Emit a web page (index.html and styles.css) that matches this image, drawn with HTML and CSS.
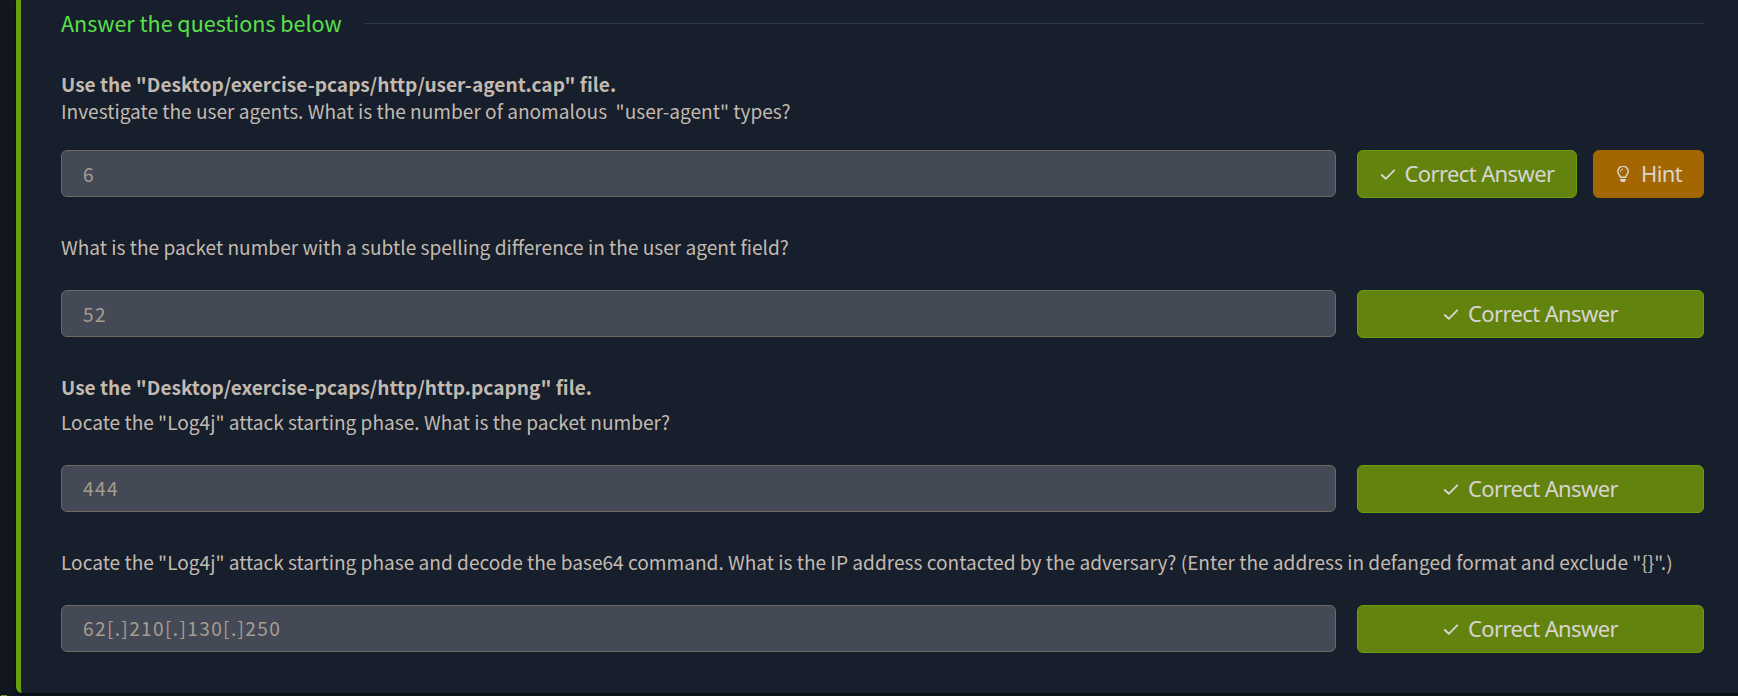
FILE: index.html
```html
<!DOCTYPE html>
<html lang="en">
<head>
<meta charset="utf-8">
<title>Answer the questions below</title>
<link rel="stylesheet" href="styles.css">
</head>
<body>
<svg class="sprite" aria-hidden="true">
  <symbol id="check" viewBox="0 0 16 16"><path d="M1.800 9 5.800 12.800 14.200 4.400" fill="none" stroke="currentColor" stroke-width="1.900" stroke-linecap="round" stroke-linejoin="round"/></symbol>
  <symbol id="bulb" viewBox="0 0 12 16"><path d="M3.500 11.200C3.200 9.400.800 8.200.800 5.500a5.200 5.200 0 0 1 10.400 0C11.200 8.200 8.800 9.400 8.500 11.200Z" fill="none" stroke="currentColor" stroke-width="1.500"/><path d="M3.400 5.700A2.600 2.600 0 0 1 6 3.100" fill="none" stroke="currentColor" stroke-width="1"/><path d="M3 13h6v.8L7.600 16H4.400L3 13.800Z" fill="currentColor"/></symbol>
</svg>
<main class="card">
  <header class="heading"><h1>Answer the questions below</h1><span class="rule"></span></header>

  <section class="question first">
    <div class="prompt"><strong>Use the "Desktop/exercise-pcaps/http/user-agent.cap" file.</strong><p>Investigate the user agents. What is the number of anomalous&nbsp; "user-agent" types?</p></div>
    <div class="row"><div class="answer low">6</div><div class="actions"><button class="btn correct"><svg class="check"><use href="#check"/></svg><span>Correct Answer</span></button><button class="btn hint"><svg class="bulb"><use href="#bulb"/></svg><span>Hint</span></button></div></div>
  </section>

  <section class="question">
    <div class="prompt"><p>What is the packet number with a subtle spelling difference in the user agent field?</p></div>
    <div class="row"><div class="answer low">52</div><div class="actions"><button class="btn correct"><svg class="check"><use href="#check"/></svg><span>Correct Answer</span></button></div></div>
  </section>

  <section class="question spaced">
    <div class="prompt"><strong>Use the "Desktop/exercise-pcaps/http/http.pcapng" file.</strong><p>Locate the "Log4j" attack starting phase. What is the packet number?</p></div>
    <div class="row"><div class="answer">444</div><div class="actions"><button class="btn correct"><svg class="check"><use href="#check"/></svg><span>Correct Answer</span></button></div></div>
  </section>

  <section class="question">
    <div class="prompt"><p>Locate the "Log4j" attack starting phase and decode the base64 command. What is the IP address contacted by the adversary? (Enter the address in defanged format and exclude "{}".)</p></div>
    <div class="row"><div class="answer">62[.]210[.]130[.]250</div><div class="actions"><button class="btn correct"><svg class="check"><use href="#check"/></svg><span>Correct Answer</span></button></div></div>
  </section>
</main>
<span class="marker"></span>
</body>
</html>
```
FILE: styles.css
```css
* { box-sizing: border-box; }
body {
  margin: 0;
  height: 696px;
  overflow: hidden;
  padding-left: 16px;
  background: #12161f;
  color: #c2bab0;
  font-family: "Noto Sans CJK SC", sans-serif;
  font-size: 19.100px;
}
.sprite { position: absolute; width: 0; height: 0; }
.card {
  height: 693px;
  padding: 7px 34px 0 40px;
  border-left: 5px solid #689f0e;
  border-radius: 0 0 0 6px;
  background: #171e2c;
  box-shadow: 0 2px 3px #080b10;
}
/* top edge of the next card's status dot */
.marker {
  position: absolute;
  left: 1px;
  top: 695px;
  width: 6px;
  height: 1px;
  background: #689f0e;
}
.heading { display: flex; align-items: center; gap: 22px; height: 32px; }
h1 { margin: 0; font-size: 21.500px; font-weight: 400; line-height: 32px; color: #5ae04a; white-space: nowrap; }
.rule { flex: 1; height: 1px; background: #2b3948; }
.question { height: 140px; }
.question.first { height: 191px; padding-top: 28px; }
.question.spaced { height: 175px; }
.prompt { height: 60px; padding-top: 3px; line-height: 28px; white-space: nowrap; }
.first .prompt { height: 83px; padding-top: 4px; line-height: 27px; }
.spaced .prompt { height: 95px; line-height: 35px; padding-top: 0; }
.prompt strong { display: block; font-weight: 700; letter-spacing: 0.010px; font-variant-ligatures: common-ligatures; }
.prompt p { margin: 0; }
.row { display: flex; gap: 21px; }
.answer {
  flex: 1;
  height: 47px;
  padding-left: 21px;
  border: 1px solid #70695f;
  border-radius: 6px;
  background: #444956;
  color: #a69d90;
  line-height: 45px;
  letter-spacing: 1.350px;
}
.answer.low { line-height: 47px; }
.actions { display: flex; gap: 16px; width: 347px; }
.btn {
  display: flex;
  flex: 1;
  align-items: center;
  justify-content: center;
  height: 48px;
  padding: 0;
  border: 1px solid #689f0e;
  border-radius: 6px;
  background: #62840f;
  color: #d8d4cf;
  font: 22px/46px "Noto Sans", sans-serif;
  letter-spacing: -0.620px;
  white-space: nowrap;
}
.btn span { position: relative; top: -1px; }
.hint { flex: 0 0 111px; padding-left: 2px; border-color: #a36600; background: #a36600; }
.check { width: 16px; height: 16px; margin-right: 9px; }
.bulb { width: 12px; height: 16px; margin-right: 12px; }
```
